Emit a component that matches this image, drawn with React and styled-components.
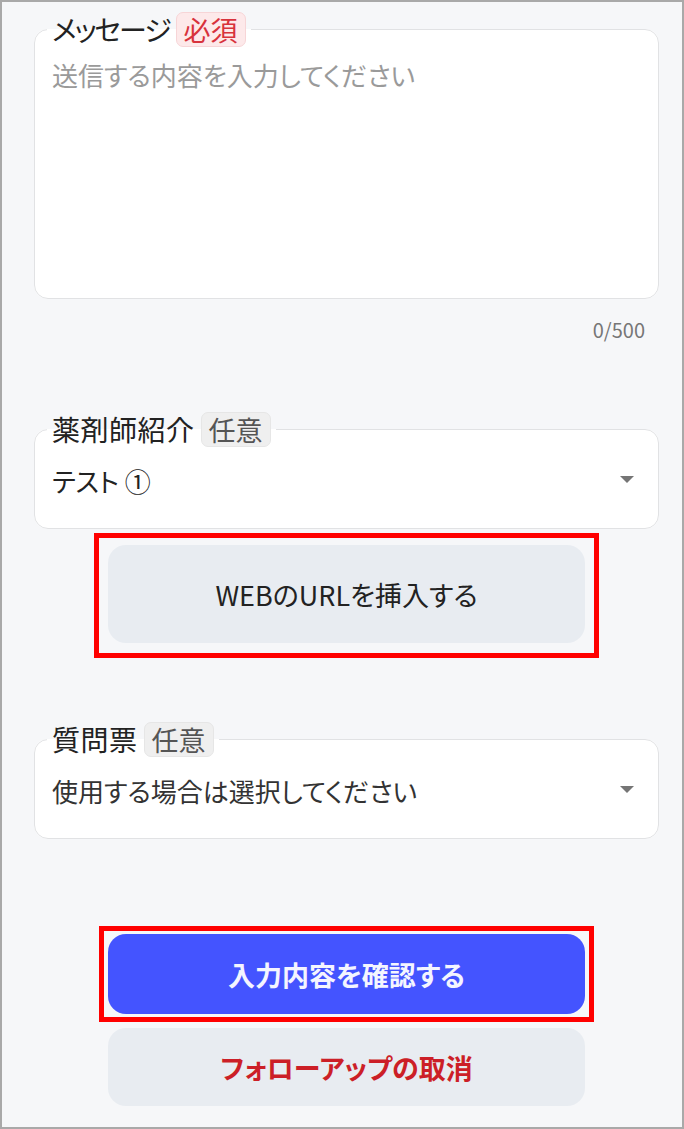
import React from "react";
import styled, { createGlobalStyle } from "styled-components";

const GlobalStyle = createGlobalStyle`
  html, body { margin: 0; padding: 0; background: #f6f7f9; }
  body {
    font-family: "Noto Sans CJK JP", "Noto Sans", sans-serif;
    font-feature-settings: "palt";
    color: #222;
  }
`;

const Frame = styled.div`
  width: 684px;
  height: 1129px;
  box-sizing: border-box;
  border: 2px solid #a9a9a9;
  background: #f6f7f9;
  padding: 10px 23px 0 32px;
  display: flex;
  flex-direction: column;
`;

const Field = styled.fieldset`
  margin: ${(p) => p.$mt || 0}px 0 0 0;
  padding: 0 17px;
  border: 1px solid #e1e2e4;
  border-radius: 14px;
  background: #fff;
  min-width: 0;
`;

const Legend = styled.legend`
  margin-left: -5px;
  padding: 0 5px;
  height: 35px;
`;

const LegendRow = styled.span`
  display: flex;
  align-items: center;
  gap: 6px;
  height: 35px;
  font-size: 28px;
  line-height: 35px;
  color: #222;
`;

const LabelText = styled.span`
  letter-spacing: ${(p) => (p.$kana ? "-2px" : "0.5px")};
`;

const Badge = styled.span`
  display: inline-block;
  height: 35px;
  box-sizing: border-box;
  padding: 0 7px;
  border-radius: 7px;
  font-size: 27px;
  line-height: 33px;
  background: ${(p) => (p.$required ? "#fde9ea" : "#efefef")};
  border: 1px solid ${(p) => (p.$required ? "#f7d5d7" : "#e6e6e6")};
  color: ${(p) => (p.$required ? "#d8323c" : "#555")};
`;

const TextArea = styled.textarea`
  display: block;
  width: 100%;
  height: 251px;
  box-sizing: border-box;
  margin: 0;
  padding: 10px 0 0 0;
  border: none;
  outline: none;
  resize: none;
  background: transparent;
  font-family: inherit;
  font-feature-settings: "palt";
  font-size: 26px;
  line-height: 36px;
  color: #222;
  &::placeholder { color: #9a9a9a; }
`;

const Counter = styled.div`
  margin: 19px 14px 0 0;
  text-align: right;
  font-size: 20px;
  line-height: 24px;
  color: #767676;
`;

const SelectBody = styled.div`
  display: flex;
  align-items: center;
  padding: 16px 7px 29px 0;
`;

const SelectValue = styled.span`
  flex: 1;
  font-size: 26px;
  line-height: 36px;
  color: ${(p) => (p.$placeholder ? "#333" : "#222")};
`;

const Arrow = styled.svg`
  width: 14px;
  height: 7px;
  margin-top: -4px;
  fill: #757575;
`;

const Highlight = styled.div`
  align-self: center;
  margin-top: ${(p) => p.$mt}px;
  border: 5px solid #ff0000;
  padding: ${(p) => p.$pad};
  display: flex;
`;

const Button = styled.button`
  width: 477px;
  height: ${(p) => p.$h}px;
  border: none;
  border-radius: 18px;
  font-family: inherit;
  font-feature-settings: "palt";
  font-size: 27px;
  cursor: pointer;
  background: ${(p) =>
    p.$variant === "primary" ? "#4454ff" : "#e8ecf1"};
  color: ${(p) =>
    p.$variant === "primary" ? "#f4f5ff" : p.$variant === "danger" ? "#cc1f27" : "#222"};
  font-weight: ${(p) => (p.$variant === "plain" ? 400 : 700)};
  align-self: ${(p) => (p.$standalone ? "center" : "auto")};
  margin-top: ${(p) => p.$mt || 0}px;
`;

const ArrowIcon = () => (
  <Arrow viewBox="0 0 14 7">
    <polygon points="0,0 14,0 7,7" />
  </Arrow>
);

export default function App() {
  return (
    <>
      <GlobalStyle />
      <Frame>
        <Field>
          <Legend>
            <LegendRow>
              <LabelText $kana>メッセージ</LabelText>
              <Badge $required>必須</Badge>
            </LegendRow>
          </Legend>
          <TextArea placeholder="送信する内容を入力してください" />
        </Field>
        <Counter>0/500</Counter>

        <Field $mt={70}>
          <Legend>
            <LegendRow>
              <LabelText>薬剤師紹介</LabelText>
              <Badge>任意</Badge>
            </LegendRow>
          </Legend>
          <SelectBody>
            <SelectValue>テスト ①</SelectValue>
            <ArrowIcon />
          </SelectBody>
        </Field>

        <Highlight $mt={4} $pad="7px 9px 10px 9px">
          <Button $variant="plain" $h={98}>WEBのURLを挿入する</Button>
        </Highlight>

        <Field $mt={64}>
          <Legend>
            <LegendRow>
              <LabelText>質問票</LabelText>
              <Badge>任意</Badge>
            </LegendRow>
          </Legend>
          <SelectBody>
            <SelectValue $placeholder>使用する場合は選択してください</SelectValue>
            <ArrowIcon />
          </SelectBody>
        </Field>

        <Highlight $mt={87} $pad="3px 4px">
          <Button $variant="primary" $h={80}>入力内容を確認する</Button>
        </Highlight>
        <Button $variant="danger" $h={78} $standalone $mt={6}>
          フォローアップの取消
        </Button>
      </Frame>
    </>
  );
}
